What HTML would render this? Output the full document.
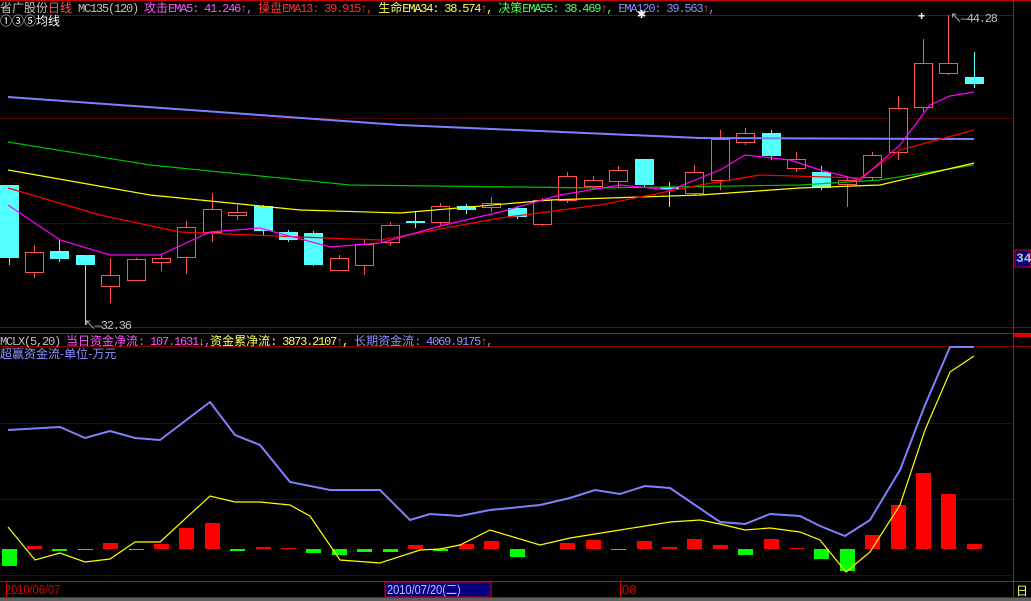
<!DOCTYPE html>
<html><head><meta charset="utf-8"><style>
body{margin:0;background:#000;width:1031px;height:601px;overflow:hidden;position:relative;font-family:"Liberation Mono","WenQuanYi Zen Hei","Noto Sans CJK SC",monospace;font-size:12px;letter-spacing:-1.2px}
.t{position:absolute;white-space:nowrap;line-height:13px}
.c{font-family:"WenQuanYi Zen Hei","Noto Sans CJK SC",sans-serif;font-size:12px;letter-spacing:0}
svg{position:absolute;left:0;top:0}
</style></head><body>
<svg id="s" width="1031" height="601" xmlns="http://www.w3.org/2000/svg">
<g stroke-width="1" shape-rendering="crispEdges">
<line x1="0" y1="0.5" x2="1031" y2="0.5" stroke="#c00000"/>
<line x1="0" y1="15.5" x2="1013" y2="15.5" stroke="#800000"/>
<line x1="0" y1="118.5" x2="1013" y2="118.5" stroke="#500000"/>
<line x1="0" y1="223.5" x2="1013" y2="223.5" stroke="#500000"/>
<line x1="0" y1="327.5" x2="1031" y2="327.5" stroke="#800000"/>
<line x1="0" y1="333.5" x2="1031" y2="333.5" stroke="#e00000"/>
<line x1="0" y1="346.5" x2="1031" y2="346.5" stroke="#800000"/>
<line x1="0" y1="423.5" x2="1013" y2="423.5" stroke="#500000"/>
<line x1="0" y1="499.5" x2="1013" y2="499.5" stroke="#500000"/>
<line x1="0" y1="575.5" x2="1013" y2="575.5" stroke="#500000"/>
<line x1="0" y1="581.5" x2="1031" y2="581.5" stroke="#e00000"/>
<line x1="0" y1="597.5" x2="1031" y2="597.5" stroke="#c00000"/>
<line x1="1013.5" y1="0" x2="1013.5" y2="598" stroke="#e00000"/>
<rect x="1014" y="334" width="17" height="3" fill="#e00000"/>
<rect x="1015" y="250" width="16" height="17" fill="#000080" stroke="#e00000"/>
<rect x="385" y="582" width="106" height="15" fill="#000080" stroke="#e00000"/>
<line x1="620.5" y1="582" x2="620.5" y2="597" stroke="#e00000"/>
<line x1="6.5" y1="582" x2="6.5" y2="597" stroke="#e00000"/>
<rect x="0" y="598" width="1031" height="3" fill="#606060"/>
</g>
<g id="g"></g>
</svg>
<div class="t" style="left:0;top:1px;color:#c0c0c0"><span class="c">省广股份</span><span class="c" style="color:#ff5454">日线</span> MC135(120) <span style="color:#ff54ff"><span class="c">攻击</span>EMA5: 41.246<span style="color:#ff5454">↑</span>,</span> <span style="color:#ff3030"><span class="c">操盘</span>EMA13: 39.915↑,</span> <span style="color:#ffff54"><span class="c">生命</span>EMA34: 38.574<span style="color:#ff5454">↑</span>,</span> <span style="color:#54ff54"><span class="c">决策</span>EMA55: 38.469<span style="color:#ff5454">↑</span>,</span> <span style="color:#9090ff">EMA120: 39.563<span style="color:#ff5454">↑</span>,</span></div>
<div class="t c" style="left:0;top:14px;color:#fff">①③⑤均线</div>
<div class="t" style="left:637px;top:10px;color:#fff;font-size:11px">✱</div>
<div class="t" style="left:918px;top:11px;color:#fff;font-weight:bold;font-size:12px">+</div>
<div class="t" style="left:950px;top:13px;color:#c0c0c0">↖—44.28</div>
<div class="t" style="left:84px;top:320px;color:#c0c0c0">↖—32.36</div>
<div class="t" style="left:1016px;top:252px;color:#c0c0c0;font-size:13px;font-weight:bold;letter-spacing:0">34</div>
<div class="t" style="left:0;top:334px;color:#c0c0c0">MCLX(5,20) <span style="color:#ff54ff"><span class="c">当日资金净流</span>: 107.1631<span style="color:#54ff54">↓</span>,</span><span style="color:#ffff54"><span class="c">资金累净流</span>: 3873.2107<span style="color:#ff5454">↑</span>,</span> <span style="color:#9090ff"><span class="c">长期资金流</span>: 4069.9175<span style="color:#ff5454">↑</span>,</span></div>
<div class="t c" style="left:0;top:347px;color:#9090ff">超赢资金流-单位-万元</div>
<div class="t" style="left:5px;top:583px;color:#e00000;font-family:'Liberation Sans Narrow','Liberation Sans',sans-serif;font-size:13px;letter-spacing:0;transform:scaleX(.85);transform-origin:left">2010/06/07</div>
<div class="t" style="left:387px;top:583px;color:#c0c0ff;font-family:'Liberation Sans Narrow','Liberation Sans','WenQuanYi Zen Hei',sans-serif;font-size:13px;letter-spacing:0;transform:scaleX(.85);transform-origin:left">2010/07/20(二)</div>
<div class="t" style="left:622px;top:583px;color:#e00000;font-family:'Liberation Sans',sans-serif;font-size:13px;letter-spacing:0">08</div>
<div class="t c" style="left:1016px;top:584px;color:#ffff54">日</div>
<script>
var c=[[185,258,185,265,0],[252,272,245,278,1],[251,259,240,262,0],[255,265,255,325,0],[275,286,258,303,1],[259,280,258,281,1],[258,262,254,271,1],[227,257,221,274,1],[209,232,193,242,1],[212,215,205,220,1],[206,231,205,235,0],[232,240,230,242,0],[233,265,231,266,0],[258,270,255,271,1],[244,265,240,275,1],[225,242,222,246,1],[221,223,212,228,0],[206,222,203,225,1],[206,210,204,214,0],[203,207,197,212,1],[208,217,206,219,0],[200,224,198,226,1],[176,200,172,203,1],[180,186,176,190,1],[170,181,166,188,1],[159,185,159,187,0],[187,189,182,207,0],[172,193,165,196,1],[139,180,130,190,1],[133,142,128,145,1],[133,156,130,160,0],[159,168,152,172,1],[172,188,166,190,0],[180,184,176,207,1],[155,177,152,180,1],[108,152,96,160,1],[63,107,39,112,1],[63,73,15,75,1],[77,84,52,88,0]];
var b=[-17,3,-2,-1,6,-1,5,21,26,-2,2,1,-4,-6,-3,-3,4,-2,5,8,-8,0,6,9,-1,8,2,10,4,-6,10,1,-10,-22,14,44,76,55,5];
var h='';
function X(i){return 9+25.4*i;}
c.forEach(function(k,i){var x=X(i),col=k[4]?'#ff5454':'#54ffff';
h+='<line x1="'+(x|0)+'.5" y1="'+k[2]+'" x2="'+(x|0)+'.5" y2="'+k[3]+'" stroke="'+col+'" shape-rendering="crispEdges"/>';
var hh=Math.max(1,k[1]-k[0]);
if(k[4])h+='<rect x="'+((x|0)-9)+'.5" y="'+k[0]+'.5" width="18" height="'+hh+'" fill="#000" stroke="'+col+'" shape-rendering="crispEdges"/>';
else h+='<rect x="'+((x|0)-9)+'" y="'+k[0]+'" width="19" height="'+hh+'" fill="'+col+'" shape-rendering="crispEdges"/>';
var v=b[i];if(v){var bx=(x|0)-7;if(v>0)h+='<rect x="'+bx+'" y="'+(549-v)+'" width="15" height="'+v+'" fill="#ff0000"/>';else h+='<rect x="'+bx+'" y="549" width="15" height="'+(-v)+'" fill="#00ff00"/>';}
});
function L(p,col,w){h+='<polyline fill="none" stroke="'+col+'" stroke-width="'+w+'" points="'+p+'"/>';}
L('8,97 400,125 700,138 974,139','#8080ff',2);
L('8,142 150,165 350,185 600,188 800,185 880,180 974,165','#00c000',1.2);
L('8,170 150,195 300,210 400,213 550,200 700,195 800,188 880,185 974,163','#ffff00',1.2);
L('8,188 100,215 180,232 300,237 380,240 500,218 600,205 700,185 760,175 860,178 900,150 974,130','#ff0000',1.2);
L('8,205 60,240 110,255 160,255 210,232 260,228 330,247 380,243 440,226 500,212 560,195 620,185 670,190 720,170 745,155 790,160 820,170 860,180 900,145 930,105 950,96 974,92','#ff00ff',1.2);
L('8,430 60,427 85,438 110,431 135,438 160,440 210,402 235,435 260,445 290,482 330,490 380,490 410,520 430,514 460,516 490,510 540,505 570,498 595,490 620,494 645,486 670,488 720,522 745,524 770,514 800,516 820,526 845,536 870,520 900,470 925,405 950,347 974,347','#8080ff',2);
L('8,527 35,560 60,553 85,562 110,559 135,542 160,542 210,496 235,502 260,502 290,505 310,516 340,560 380,563 420,550 440,549 460,545 490,530 540,545 570,538 620,530 670,522 700,520 720,524 745,530 770,528 800,532 820,540 846,572 870,552 900,505 925,430 950,372 974,356','#ffff00',1.2);
document.getElementById('g').innerHTML=h;
</script>
</body></html>
